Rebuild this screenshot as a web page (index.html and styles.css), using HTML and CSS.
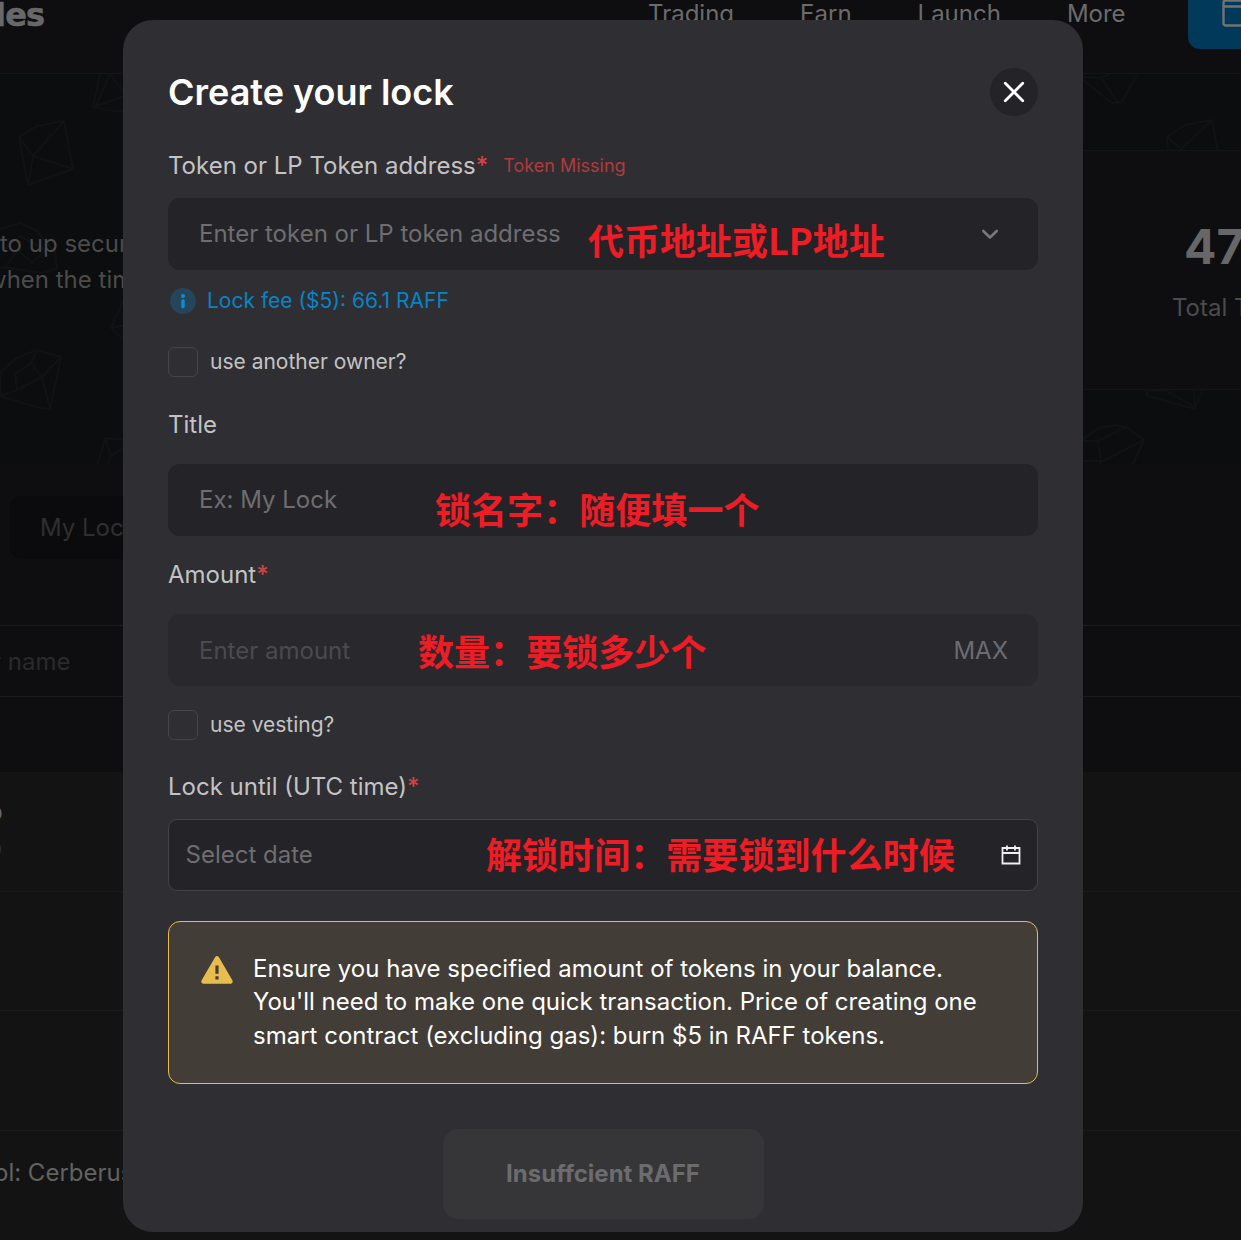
FILE: index.html
```html
<!DOCTYPE html>
<html lang="en">
<head>
<meta charset="utf-8">
<title>Create your lock</title>
<link rel="stylesheet" href="styles.css">
</head>
<body>
<div class="page">
  <header class="topbar">
    <div class="brand">les</div>
    <nav class="nav"><span>Trading</span><span>Earn</span><span>Launch</span><span>More</span></nav>
    <div class="wallet">
      <svg width="40" height="32" viewBox="0 0 40 32" fill="none" stroke="#737373" stroke-width="2.400"><rect x="1.500" y="0.500" width="34" height="25" rx="2"/><path d="M1 6.500h34M35 13H23a3 3 0 0 0 0 6h12"/></svg>
    </div>
  </header>
  <section class="hero">
    <svg class="crystals" width="1241" height="390" viewBox="0 74 1241 390" fill="none" stroke="#101314" stroke-width="2" stroke-linejoin="round">
      <path d="M19 137 37 126 64 121 73 169 28 185ZM19 137 33 156 64 121M33 156 28 185M33 156 73 169"/>
      <path d="M100 74 93 107 105 110 130 112M110 74 123 91M110 74 96 106 125 96"/>
      <path d="M0 229 20 223 36 230 55 252 57 268 43 273 0 267M5 267 18 250 32 263 46 250 20 236 5 249"/>
      <path d="M125 297 111 328 125 341M112 328 125 325"/>
      <path d="M0 373 16 358 37 350 61 357 50 409 40 408 0 396ZM31 363 37 350M31 363 15 374 17 390 42 377 31 363M42 377 61 357M42 377 50 409M17 390 0 396"/>
      <path d="M125 440 105 438 98 464M105 438 111 456 125 447M111 456 108 464"/>
      <path d="M1083 80 1112 103 1122 102 1137 74M1083 77 1101 78 1117 102M1101 78 1110 74"/>
      <path d="M1168 151 1167 137 1185 125 1212 120 1218 151M1167 137 1181 149 1212 120"/>
      <path d="M1145 389 1148 396 1195 409 1203 389M1145 391 1165 390 1195 407 1194 389"/>
      <path d="M1083 439 1099 428 1115 425 1126 427 1144 440 1133 464M1083 441 1098 441 1126 427M1144 440 1103 461 1083 461M1098 441 1101 464"/>
    </svg>
    <p class="hero-copy"><span>to up secure</span><span>when the time</span></p>
    <div class="stats"><strong>47</strong><span>Total Tokens</span></div>
  </section>
  <div class="tabs"><div class="tab">My Locks</div></div>
  <div class="search">r name</div>
  <div class="rows">
    <div class="row row-token"><b>o</b><span>o</span></div>
    <div class="row"></div>
    <div class="row"></div>
    <div class="row row-last"><span>ol: Cerberus</span></div>
  </div>
</div>

<main class="modal">
  <div class="modal-head">
    <h1>Create your lock</h1>
    <button class="close" aria-label="Close"><svg width="24" height="24" viewBox="0 0 24 24" fill="none" stroke="#fff" stroke-width="2.800" stroke-linecap="round"><path d="M3.300 3.300 20.700 20.700M20.700 3.300 3.300 20.700"/></svg></button>
  </div>
  <div class="label label-token"><span>Token or LP Token address</span><i>*</i><small>Token Missing</small></div>
  <div class="field"><span>Enter token or LP token address</span>
    <svg width="20" height="12" viewBox="0 0 20 12" fill="none" stroke="#78787a" stroke-width="2.600" stroke-linecap="round" stroke-linejoin="round"><path d="M3.300 3 10 9.500 16.700 3"/></svg>
  </div>
  <div class="fee"><svg width="26" height="26" viewBox="0 0 26 26"><circle cx="13" cy="13" r="13" fill="#26455a"/><circle cx="13" cy="8" r="2" fill="#0a8fd6"/><rect x="11.300" y="11.300" width="3.400" height="9" rx="1.500" fill="#0a8fd6"/></svg><span>Lock fee ($5): 66.1 RAFF</span></div>
  <div class="check"><span class="box"></span><span>use another owner?</span></div>
  <div class="label label-title"><span>Title</span></div>
  <div class="field"><span>Ex: My Lock</span></div>
  <div class="label label-amount"><span>Amount</span><i>*</i></div>
  <div class="field field-off"><span>Enter amount</span><span class="max">MAX</span></div>
  <div class="check check-vesting"><span class="box"></span><span>use vesting?</span></div>
  <div class="label label-until"><span>Lock until (UTC time)</span><i>*</i></div>
  <div class="field field-date"><span>Select date</span>
    <svg width="20" height="20" viewBox="0 0 20 20" fill="none" stroke="#f0f0f0" stroke-width="1.800"><path d="M1.500 3h17v15.500h-17ZM1 8h18M6 .5v5M14 .5v5"/></svg>
  </div>
  <div class="alert">
    <svg width="32" height="28" viewBox="0 0 32 28"><path fill="#e8bd4f" fill-rule="evenodd" d="M14.200 1.100Q16-.9 17.800 1.100L31.500 24.500Q32.300 27.500 30 27.800H2Q-.3 27.500.5 24.500ZM14.400 9.500v8.200h3.200V9.500ZM14.400 20.200v3.200h3.200v-3.200Z"/></svg>
    <p><span>Ensure you have specified amount of tokens in your balance.</span><span>You'll need to make one quick transaction. Price of creating one</span><span>smart contract (excluding gas): burn $5 in RAFF tokens.</span></p>
  </div>
  <button class="submit">Insuffcient RAFF</button>

  <span class="note note-token">代币地址或LP地址</span>
  <span class="note note-title">锁名字：随便填一个</span>
  <span class="note note-amount">数量：要锁多少个</span>
  <span class="note note-date">解锁时间：需要锁到什么时候</span>
</main>
</body>
</html>
```
FILE: styles.css
```css
* { box-sizing: border-box; }
body {
  margin: 0;
  width: 1241px;
  height: 1240px;
  overflow: hidden;
  position: relative;
  background: #0e0e10;
  font: 24px/36px Inter, "Noto Sans CJK SC", sans-serif;
  color: #c3c3c4;
}
.page { height: 1240px; overflow: hidden; white-space: nowrap; color: #4b4b4c; }

.topbar {
  height: 74px;
  border-bottom: 1px solid #151517;
  display: flex;
  align-items: flex-start;
}
.brand {
  width: 653px;
  margin-left: -5px;
  margin-top: -3px;
  color: #68686a;
  font: 700 32px/36px "DejaVu Sans", sans-serif;
  letter-spacing: -0.8px;
  -webkit-text-stroke: 0.6px #68686a;
}
.nav { display: flex; gap: 66px; margin-top: -4px; color: #6b6b6c; }
.wallet {
  margin-left: auto;
  width: 53px;
  height: 49px;
  padding-left: 34px;
  overflow: hidden;
  border-bottom-left-radius: 12px;
  background: #00395a;
}
.wallet svg { display: block; }

.hero { height: 391px; display: flex; justify-content: space-between; position: relative; background: #0c0d0e; }
.crystals { position: absolute; left: 0; top: 0; }
.hero-copy { margin: 152px 0 0; position: relative; }
.hero-copy span { display: block; }
.hero-copy span:last-child { margin-left: -13px; }
.stats {
  position: relative;
  width: 158px;
  height: 240px;
  margin-top: 76px;
  padding: 66px 0 0 89px;
  border: solid #131416;
  border-width: 1px 0;
  background: #0e0e10;
  overflow: hidden;
}
.stats strong { display: block; margin-left: 12px; font-size: 48px; line-height: 60px; color: #676767; }
.stats span { display: block; margin-top: 13px; }

.tabs { height: 161px; padding: 31px 0 0 10px; border-bottom: 1px solid #1c1c1e; }
.tab { width: 300px; height: 63px; padding-left: 30px; line-height: 63px; border-radius: 12px; background: #0b0b0d; color: #2f2f30; }
.search { height: 71px; margin-left: -8px; line-height: 72px; border-bottom: 1px solid #1c1c1e; color: #2a2a2b; }
.rows { margin-top: 75px; background: #131313; }
.row { height: 119.500px; border-bottom: 1px solid #1b1b1b; }
.row-token { padding-top: 22px; }
.row-token b, .row-token span { display: block; margin-left: -12px; line-height: 36px; }
.row-token b { margin-left: -14px; font-size: 27px; color: #686868; }
.row-token span { color: #2a2a2a; }
.row-last { padding-top: 24px; color: #626262; }
.row-last span { margin-left: -6px; }

.modal {
  position: absolute;
  left: 123px;
  top: 20px;
  width: 960px;
  height: 1212px;
  padding: 48px 45px 0;
  border-radius: 30px;
  background: #2f2e33;
  white-space: nowrap;
}
.modal-head { height: 48px; display: flex; align-items: center; justify-content: space-between; }
h1 { margin: 0; font-size: 36px; line-height: 48px; font-weight: 600; color: #fff; }
.close {
  width: 48px;
  height: 48px;
  padding: 0;
  border: 0;
  border-radius: 50%;
  display: grid;
  place-items: center;
  background: #242328;
}
.label { height: 36px; display: flex; align-items: center; }
.label i { font-style: normal; font-weight: 500; color: #d04343; }
.label small { margin-left: 15px; font-size: 18px; color: #b03b3d; }
.label-token { margin: 32px 0 14px; }
.label-title { margin: 30px 0 21px; }
.label-amount { margin: 21px 0; }
.label-until { margin: 29px 0 14px; }

.field {
  height: 72px;
  padding: 0 38px 0 31px;
  display: flex;
  align-items: center;
  justify-content: space-between;
  border-radius: 12px;
  background: #242328;
  color: #6e6e70;
}
.field-off { padding-top: 2px; padding-right: 30px; background: #29282d; color: #4b4b4e; }
.max { color: #6c6c6f; }
.field-date { padding: 0 16px 0 16.500px; border: 1px solid #434347; border-radius: 9px; }

.fee { height: 26px; margin: 18px 0 33px 2px; display: flex; align-items: center; gap: 11px; font-size: 21px; color: #0784c6; }
.check { height: 30px; display: flex; align-items: center; gap: 12px; font-size: 21px; }
.check-vesting { margin-top: 24px; }
.box { width: 30px; height: 30px; border: 1px solid #454549; border-radius: 6px; }

.alert {
  height: 163px;
  margin-top: 30px;
  padding: 30px 32px;
  display: flex;
  gap: 20px;
  border: 1px solid #e8bd4f;
  border-radius: 12px;
  background: #423d37;
  color: #fff;
}
.alert svg { margin-top: 4px; }
.alert p { margin: 0; line-height: 33.400px; }
.alert p span { display: block; }

.submit {
  display: block;
  width: 321px;
  height: 90px;
  margin: 45px auto 0;
  padding: 0;
  border: 0;
  border-radius: 15px;
  background: #363638;
  color: #6c6c6e;
  font: 700 24px/36px Inter, sans-serif;
}

.note { position: absolute; font: 700 36px/48px "Noto Sans CJK SC", sans-serif; letter-spacing: 0.06px; color: #ee1c25; }
.note-token { left: 465px; top: 195px; letter-spacing: 0; }
.note-title { left: 312px; top: 464px; }
.note-amount { left: 295px; top: 606px; }
.note-date { left: 363px; top: 809px; }
```
